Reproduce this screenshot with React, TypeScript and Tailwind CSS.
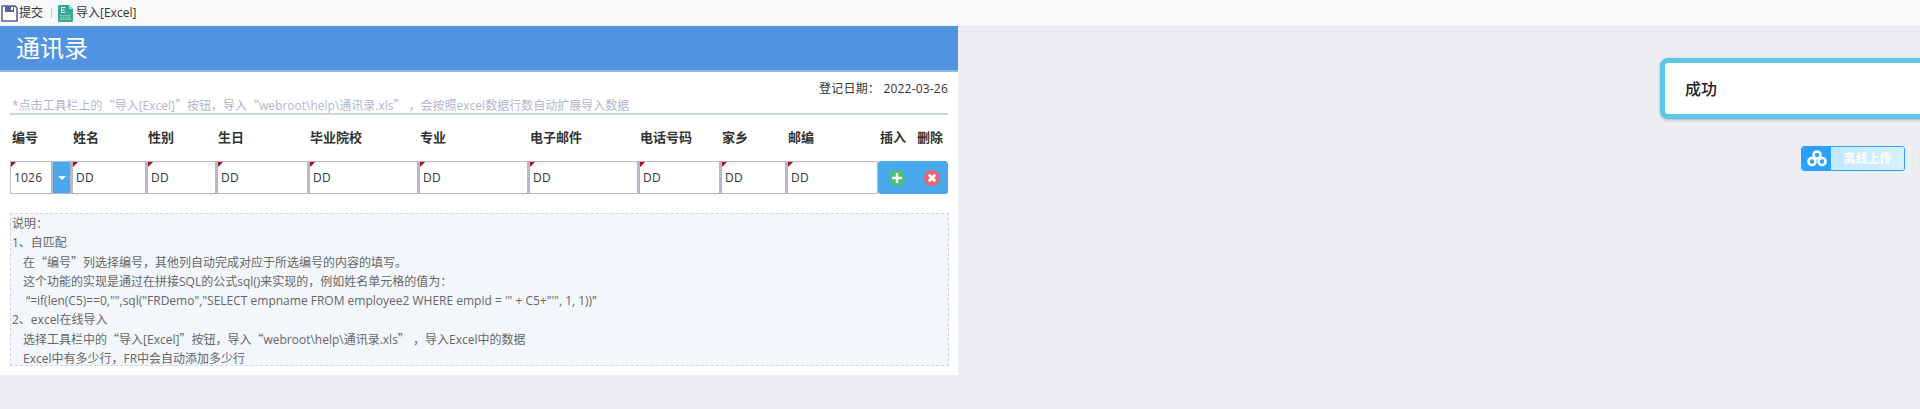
import type { ReactNode } from "react";

const fontStack = { fontFamily: '"Open Sans", "Noto Sans CJK SC", sans-serif' };

const columns = [
  { label: "编号", value: "1026", span: true },
  { label: "姓名", value: "DD" },
  { label: "性别", value: "DD" },
  { label: "生日", value: "DD" },
  { label: "毕业院校", value: "DD" },
  { label: "专业", value: "DD" },
  { label: "电子邮件", value: "DD" },
  { label: "电话号码", value: "DD" },
  { label: "家乡", value: "DD" },
  { label: "邮编", value: "DD" },
];

const gridCols = "grid grid-cols-[61px_75px_70px_92px_110px_110px_110px_82px_66px_92px_37px_33px]";

// 全角引号，Open Sans 里的太窄
function Q({ children }: { children: ReactNode }) {
  return <span lang="zh-CN" className="font-['Noto_Sans_CJK_SC']">{children}</span>;
}

function SaveIcon() {
  return (
    <svg width="17" height="17" viewBox="0 0 17 17" className="shrink-0">
      <path d="M1 1h13l2 2v13H1z" fill="#fff" stroke="#5c5f9e" strokeWidth="1.6" />
      <rect x="4" y="1" width="9" height="6" fill="#5c5f9e" />
      <rect x="10" y="2" width="2" height="3" fill="#fff" />
    </svg>
  );
}

function ExcelIcon() {
  return (
    <svg width="16" height="17" viewBox="0 0 16 17" className="shrink-0">
      <path d="M1 0h10l4 4v12a1 1 0 0 1-1 1H1a1 1 0 0 1-1-1V1a1 1 0 0 1 1-1z" fill="#37a78f" />
      <path d="M11 0l4 4h-4z" fill="#9ad6c6" />
      <path d="M3 2h4v1H4v1.500h2.500v1H4V7h3v1H3z" fill="#fff" />
      <path d="M2 10h11v5H2z" fill="#8fd3c2" />
      <path d="M2 11.500h11M2 13.200h11M4.500 10v5M7 10v5M9.500 10v5M12 10v5" stroke="#37a78f" strokeWidth="0.7" />
    </svg>
  );
}

function CornerMark() {
  return <span className="absolute left-0 top-0 h-0 w-0 border-r-[5px] border-t-[5px] border-r-transparent border-t-[#b3001b]" />;
}

function Cell({ value, combo }: { value: string; combo?: boolean }) {
  return (
    <div className="relative flex h-[33px] items-center border border-l-2 border-[#b7b7c9] bg-white text-[12px] tracking-[0.2px] text-[#333] first:border-l">
      <CornerMark />
      <span className="flex-1 pl-[3px]">{value}</span>
      {combo && (
        <span className="flex h-full w-[19px] items-center justify-center border-l-2 border-[#b7b7c9] bg-[#4aa8ec]">
          <span className="h-0 w-0 border-x-[4px] border-t-[4px] border-x-transparent border-t-white" />
        </span>
      )}
    </div>
  );
}

function ActionButton({ color, children, side }: { color: string; children: ReactNode; side: string }) {
  return (
    <div className={`flex h-[33px] items-center justify-center bg-[#4aa8ec] ${side}`}>
      <svg width="16" height="16" viewBox="0 0 16 16">
        <circle cx="8" cy="8" r="8" fill={color} />
        {children}
      </svg>
    </div>
  );
}

export default function App() {
  return (
    <div className="relative flex h-[409px] flex-col overflow-hidden bg-[#edeef3]" style={fontStack}>
      <div className="flex h-[26px] shrink-0 items-center bg-[#f7f8fa] pl-[1px] text-[12px] text-[#333]">
        <SaveIcon />
        <span className="ml-[1px]">提交</span>
        <span className="ml-[8px] h-[10px] w-px bg-[#c5c5c5]" />
        <span className="ml-[6px]"><ExcelIcon /></span>
        <span className="ml-[2px]">导入[Excel]</span>
      </div>

      <div className="flex h-[349px] w-[958px] flex-col bg-white">
        <div className="flex h-[46px] shrink-0 items-center border-b-2 border-[#85bfdc] bg-[#5093e1] pl-[16px] text-[24px] text-white">
          通讯录
        </div>

        <div className="flex flex-col px-[10px]">
          <div className="flex h-[43px] flex-col border-b-2 border-[#ccd4ea]">
            <div className="pt-[8px] text-right text-[12px] leading-[17px] tracking-[0.2px] text-[#333]">登记日期： 2022-03-26</div>
            <div className="pl-[2px] text-[12px] leading-[16px] text-[#b1b6cd]">
              *点击工具栏上的<Q>“</Q>导入[Excel]<Q>”</Q>按钮，导入<Q>“</Q>webroot\help\通讯录.xls<Q>”</Q> ，会按照excel数据行数自动扩展导入数据
            </div>
          </div>

          <div className={`${gridCols} h-[46px] items-center text-[13px] font-bold text-[#333]`}>
            {columns.map((c) => (
              <div key={c.label} className="pl-[2px]">{c.label}</div>
            ))}
            <div className="pl-[2px]">插入</div>
            <div className="pl-[2px]">删除</div>
          </div>

          <div className={gridCols}>
            {columns.map((c) => (
              <Cell key={c.label} value={c.value} combo={c.span} />
            ))}
            <ActionButton color="#4fc073" side="rounded-l-[3px]">
              <path d="M8 3v10M3 8h10" stroke="#fff" strokeWidth="2.400" />
            </ActionButton>
            <ActionButton color="#ea6470" side="rounded-r-[3px]">
              <path d="M4.800 4.800l6.400 6.400M11.200 4.800l-6.400 6.400" stroke="#fff" strokeWidth="2.800" />
            </ActionButton>
          </div>

          <div className="mt-[19px] h-[153px] w-[939px] border border-dashed border-[#ccd6ea] bg-[#f3f7fb] pl-[1px] text-[12px] leading-[19px] text-[#666]">
            <div>说明：</div>
            <div>1、自匹配</div>
            <div className="pl-[11px]">在<Q>“</Q>编号<Q>”</Q>列选择编号，其他列自动完成对应于所选编号的内容的填写。</div>
            <div className="pl-[11px]">这个功能的实现是通过在拼接SQL的公式sql()来实现的，例如姓名单元格的值为：</div>
            <div className="pl-[14px]">“=if(len(C5)==0,"",sql("FRDemo","SELECT empname FROM employee2 WHERE empid = '" + C5+"'", 1, 1))”</div>
            <div>2、excel在线导入</div>
            <div className="pl-[11px]">选择工具栏中的<Q>“</Q>导入[Excel]<Q>”</Q>按钮，导入<Q>“</Q>webroot\help\通讯录.xls<Q>”</Q> ，导入Excel中的数据</div>
            <div className="pl-[11px]">Excel中有多少行，FR中会自动添加多少行</div>
          </div>
        </div>
      </div>

      <div className="absolute left-[1660px] top-[58px] flex h-[61px] w-[270px] items-center rounded-[8px] border-[5px] border-[#5bc8e8] bg-white pl-[20px] text-[16px] font-medium text-[#222] shadow-[0_1px_3px_rgba(0,0,0,0.25)]">
        成功
      </div>

      <div className="absolute left-[1801px] top-[146px] flex h-[25px] w-[104px] overflow-hidden rounded-[3px] border border-[#2aa0ff]">
        <span className="flex w-[29px] items-center justify-center bg-[#2aa0ff]">
          <svg width="20" height="17" viewBox="0 0 20 17" fill="none" stroke="#fff" strokeWidth="2.600">
            <circle cx="10" cy="5" r="3.500" />
            <circle cx="5" cy="11.500" r="3.500" />
            <circle cx="15" cy="11.500" r="3.500" />
          </svg>
        </span>
        <span className="flex flex-1 items-center justify-center bg-gradient-to-r from-[#c0e9ff] to-[#d6f1ff] text-[12px] font-bold text-white">
          离线上传
        </span>
      </div>
    </div>
  );
}
